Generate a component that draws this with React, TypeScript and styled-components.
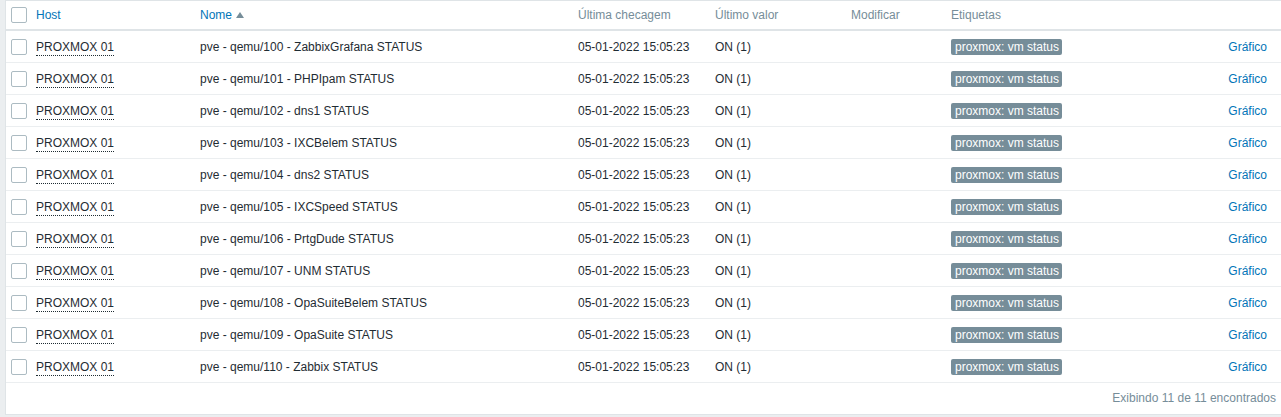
import React from "react";
import styled, { createGlobalStyle } from "styled-components";

const Global = createGlobalStyle`
  html, body { margin: 0; padding: 0; background: #ebeef0; overflow: hidden; }
  body { font-family: "Liberation Sans", Arial, sans-serif; font-size: 12px; color: #1f2c33; }
`;

const Panel = styled.div`
  box-sizing: border-box;
  margin-left: 5px;
  width: 1277px;
  background: #fff;
  border: 1px solid #dfe4e7;
`;

const Table = styled.table`
  width: 100%;
  table-layout: fixed;
  border-collapse: collapse;
  border-spacing: 0;
`;

const Th = styled.th<{ $link?: boolean }>`
  height: 28px;
  padding: 0 5px;
  text-align: left;
  font-weight: normal;
  color: ${(p) => (p.$link ? "#0275b8" : "#768d99")};
  border-bottom: 2px solid #dfe4e7;
  white-space: nowrap;
  vertical-align: middle;
`;

const Row = styled.tr`
  border-bottom: 1px solid #ebeef0;
`;

const Td = styled.td<{ $right?: boolean; $pr?: number }>`
  height: 31px;
  padding: 0 ${(p) => p.$pr ?? 5}px 0 5px;
  white-space: nowrap;
  vertical-align: middle;
  text-align: ${(p) => (p.$right ? "right" : "left")};
  line-height: 14px;
`;

const Check = styled.span`
  display: block;
  box-sizing: border-box;
  width: 16px;
  height: 16px;
  border: 1px solid #acbbc2;
  border-radius: 2px;
  background: #fff;
`;

const HostLink = styled.span`
  border-bottom: 1px dotted #1f2c33;
  padding-bottom: 1px;
`;

const SortArrow = styled.span`
  display: inline-block;
  width: 0;
  height: 0;
  margin-left: 4px;
  border-left: 4px solid transparent;
  border-right: 4px solid transparent;
  border-bottom: 6px solid #768d99;
  vertical-align: 1px;
`;

const Tag = styled.span`
  display: inline-block;
  background: #768d99;
  color: #fff;
  padding: 1px 3px 1px 4px;
  border-radius: 2px;
  line-height: 14px;
`;

const Link = styled.span`
  color: #0275b8;
`;

const Footer = styled.div`
  height: 31px;
  line-height: 31px;
  padding: 0 5px;
  text-align: right;
  color: #768d99;
`;

const items = [
  "pve - qemu/100 - ZabbixGrafana STATUS",
  "pve - qemu/101 - PHPIpam STATUS",
  "pve - qemu/102 - dns1 STATUS",
  "pve - qemu/103 - IXCBelem STATUS",
  "pve - qemu/104 - dns2 STATUS",
  "pve - qemu/105 - IXCSpeed STATUS",
  "pve - qemu/106 - PrtgDude STATUS",
  "pve - qemu/107 - UNM STATUS",
  "pve - qemu/108 - OpaSuiteBelem STATUS",
  "pve - qemu/109 - OpaSuite STATUS",
  "pve - qemu/110 - Zabbix STATUS",
];

export default function App() {
  return (
    <>
      <Global />
      <Panel>
        <Table>
          <colgroup>
            <col style={{ width: 25 }} />
            <col style={{ width: 164 }} />
            <col style={{ width: 378 }} />
            <col style={{ width: 137 }} />
            <col style={{ width: 136 }} />
            <col style={{ width: 100 }} />
            <col style={{ width: 214 }} />
            <col />
          </colgroup>
          <thead>
            <tr>
              <Th><Check /></Th>
              <Th $link>Host</Th>
              <Th $link>Nome<SortArrow /></Th>
              <Th>Última checagem</Th>
              <Th>Último valor</Th>
              <Th>Modificar</Th>
              <Th>Etiquetas</Th>
              <Th />
            </tr>
          </thead>
          <tbody>
            {items.map((name) => (
              <Row key={name}>
                <Td><Check /></Td>
                <Td><HostLink>PROXMOX 01</HostLink></Td>
                <Td>{name}</Td>
                <Td>05-01-2022 15:05:23</Td>
                <Td>ON (1)</Td>
                <Td />
                <Td><Tag>proxmox: vm status</Tag></Td>
                <Td $right $pr={14}><Link>Gráfico</Link></Td>
              </Row>
            ))}
          </tbody>
        </Table>
        <Footer>Exibindo 11 de 11 encontrados</Footer>
      </Panel>
    </>
  );
}
